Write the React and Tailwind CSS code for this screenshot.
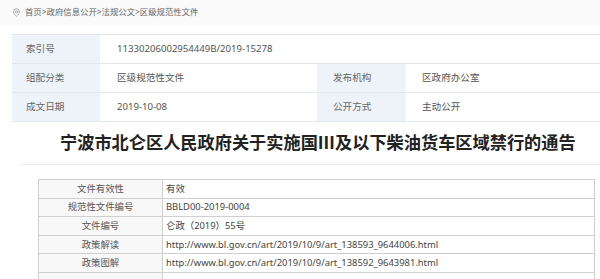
import React from 'react';
import { MapPin } from 'lucide-react';

const topRows = [
  { label: '组配分类', value: '区级规范性文件', label2: '发布机构', value2: '区政府办公室' },
  { label: '成文日期', value: '2019-10-08', label2: '公开方式', value2: '主动公开' },
];

const docRows = [
  { label: '文件有效性', value: '有效' },
  { label: '规范性文件编号', value: 'BBLD00-2019-0004' },
  { label: '文件编号', value: '仑政（2019）55号' },
  { label: '政策解读', value: 'http://www.bl.gov.cn/art/2019/10/9/art_138593_9644006.html' },
  { label: '政策图解', value: 'http://www.bl.gov.cn/art/2019/10/9/art_138592_9643981.html' },
  { label: '', value: '' },
];

const App = () => {
  return (
    <div
      className="w-[600px] h-[279px] overflow-hidden bg-white text-[#444]"
      style={{ fontFamily: '"Noto Sans", "Noto Sans CJK SC", sans-serif' }}
    >
      {/* Breadcrumb */}
      <div className="h-[25px] flex items-center pl-[12px] gap-[4px] text-[8.4px] text-[#666] bg-[#fafafa]">
        <MapPin size={9} strokeWidth={1.6} className="text-[#888]" />
        <span>首页&gt;政府信息公开&gt;法规公文&gt;区级规范性文件</span>
      </div>

      {/* Meta table */}
      <div className="mt-[9px] ml-[12px] w-[620px] border-t border-[#e3e7ee] text-[9.6px]">
        <div className="flex h-[29px] border-b border-[#e3e7ee]">
          <div className="w-[88px] bg-[#eef3f9] flex items-center pl-[14px] text-[#666]">索引号</div>
          <div className="flex-1 flex items-center pl-[17px] text-[#555]">11330206002954449B/2019-15278</div>
        </div>
        {topRows.map((row) => (
          <div key={row.label} className="flex h-[29px] border-b border-[#e3e7ee]">
            <div className="w-[88px] bg-[#eef3f9] flex items-center pl-[14px] text-[#666]">{row.label}</div>
            <div className="w-[217px] flex items-center pl-[17px] text-[#555]">{row.value}</div>
            <div className="w-[89px] bg-[#eef3f9] flex items-center pl-[16px] text-[#666]">{row.label2}</div>
            <div className="flex-1 flex items-center pl-[16px] text-[#555]">{row.value2}</div>
          </div>
        ))}
      </div>

      {/* Title */}
      <div className="ml-[20px] h-[43px] flex items-center pl-[40px] border-b border-[#ececec]">
        <h1 className="text-[17.2px] font-bold text-[#222] leading-none">
          宁波市北仑区人民政府关于实施国Ⅲ及以下柴油货车区域禁行的通告
        </h1>
      </div>

      {/* Document info table */}
      <div className="mt-[14px] ml-[38px] w-[557px] border-t border-l border-r border-[#cfcfcf] text-[9.4px]">
        {docRows.map((row, i) => (
          <div key={i} className="flex h-[18.6px] border-b border-[#cfcfcf]">
            <div className="w-[124px] bg-[#f8f8f8] border-r border-[#cfcfcf] flex items-center justify-center text-[#555]">
              {row.label}
            </div>
            <div className="flex-1 flex items-center pl-[3px] text-[#444]">{row.value}</div>
          </div>
        ))}
      </div>
    </div>
  );
};

export default App;
